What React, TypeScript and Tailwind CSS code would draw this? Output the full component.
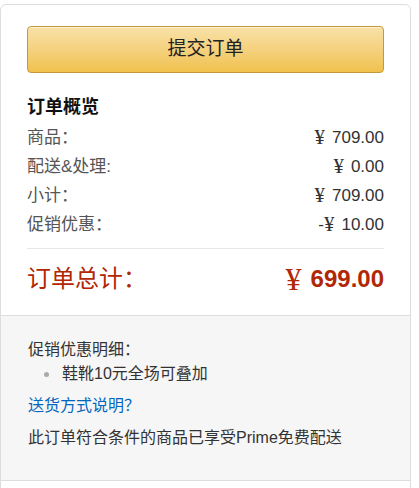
import React from 'react';

const rows = [
    { label: '商品：', sign: '', value: '709.00' },
    { label: '配送&处理:', sign: '', value: '0.00' },
    { label: '小计：', sign: '', value: '709.00' },
    { label: '促销优惠：', sign: '-', value: '10.00' },
];

const font = { fontFamily: '"Liberation Sans", "Noto Sans CJK SC", sans-serif' };

const Yen = ({ className }: { className: string }) => (
    <span className={className} style={{ fontFamily: '"Liberation Serif", serif' }}>¥</span>
);

const App = () => {
    return (
        <div className="w-[419px] h-[488px] overflow-hidden bg-white" style={font}>
            <div className="mt-[4px] w-[411px] border border-[#dddddd] rounded-[6px] pb-[30px]">
                <div className="px-[26px] pt-[21px] pb-[18px]">
                    <button className="w-full h-[47px] rounded-[4px] border border-[#c29a3a] bg-gradient-to-b from-[#f8e1a8] to-[#f0c14b] text-[19px] text-[#222] shadow-[inset_0_1px_0_rgba(255,255,255,0.5)]">
                        提交订单
                    </button>

                    <h3 className="mt-[22px] text-[18px] leading-[24px] font-bold text-[#111]">订单概览</h3>

                    <div className="mt-[4px]">
                        {rows.map((row) => (
                            <div key={row.label} className="flex justify-between h-[29px] items-center text-[17px]">
                                <span className="text-[#555]">{row.label}</span>
                                <span className="flex items-center text-[#333]">
                                    {row.sign}
                                    <Yen className="text-[21px] leading-none mr-[7px]" />
                                    {row.value}
                                </span>
                            </div>
                        ))}
                    </div>

                    <div className="mt-[9px] border-t border-[#e7e7e7]" />

                    <div className="mt-[12px] flex justify-between items-center h-[36px] text-[#b12704]">
                        <span className="text-[24px]">订单总计：</span>
                        <span className="flex items-center text-[24px] font-bold">
                            <Yen className="text-[32px] font-normal leading-none mr-[9px]" />
                            699.00
                        </span>
                    </div>
                </div>

                <div className="h-[166px] bg-[#f6f6f6] border-y border-[#dddddd] px-[27px] pt-[22px] text-[16px] leading-[24px] text-[#333]">
                    <div>促销优惠明细：</div>
                    <div className="flex items-center">
                        <span className="ml-[16px] mr-[13px] w-[5px] h-[5px] rounded-full bg-[#aaaaaa]" />
                        <span>鞋靴10元全场可叠加</span>
                    </div>
                    <a href="#" className="block mt-[8px] text-[#0066c0]">送货方式说明？</a>
                    <div className="mt-[8px]">此订单符合条件的商品已享受Prime免费配送</div>
                </div>
            </div>
        </div>
    );
};

export default App;
